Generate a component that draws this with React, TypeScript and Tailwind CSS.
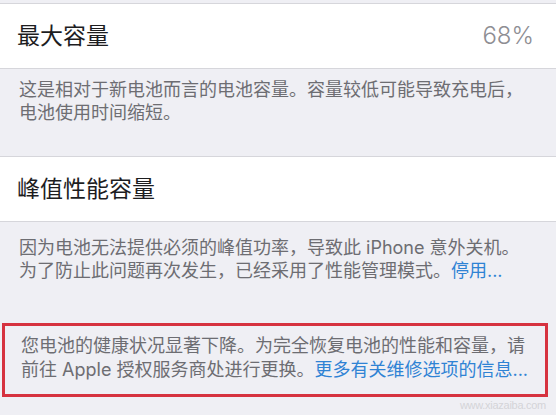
const font = "font-['Inter','Noto_Sans_CJK_SC',sans-serif]";

type RowProps = { title: string; value?: string };

const Row = ({ title, value }: RowProps) => (
    <div className="flex h-[66px] items-center justify-between border-y border-[#d6d6db] bg-white pl-[17px] pr-[22px]">
        <span className="text-[23px] text-[#1d1d1f]">{title}</span>
        {value && <span className="text-[24px] font-light text-[#8e8e93]">{value}</span>}
    </div>
);

const Line = ({ children }: { children: React.ReactNode }) => (
    <div className="whitespace-nowrap">{children}</div>
);

const Link = ({ children }: { children: React.ReactNode }) => (
    <span className="text-[#2f83d4]">{children}</span>
);

export default function App() {
    return (
        <div className={`relative h-[415px] w-[556px] overflow-hidden bg-[#efeff4] pt-[3px] ${font}`}>
            <Row title="最大容量" value="68%" />
            <div className="px-[19px] pb-[32px] pt-[9px] text-[18px] leading-[23px] text-[#6d6d72]">
                <Line>这是相对于新电池而言的电池容量。容量较低可能导致充电后，</Line>
                <Line>电池使用时间缩短。</Line>
            </div>
            <Row title="峰值性能容量" />
            <div className="px-[19px] pt-[14px] text-[18px] leading-[23px] text-[#6d6d72]">
                <Line>因为电池无法提供必须的峰值功率，导致此 iPhone 意外关机。</Line>
                <Line>
                    为了防止此问题再次发生，已经采用了性能管理模式。<Link>停用...</Link>
                </Line>
            </div>
            <div className="ml-[2px] mt-[41px] w-[546px] border-[3px] border-[#d6323f] pb-[12px] pl-[16px] pt-[8px] text-[18px] leading-[24px] text-[#6d6d72]">
                <Line>您电池的健康状况显著下降。为完全恢复电池的性能和容量，请</Line>
                <Line>
                    前往 Apple 授权服务商处进行更换。<Link>更多有关维修选项的信息...</Link>
                </Line>
            </div>
            <span className="absolute bottom-[2px] right-[10px] text-[11px] tracking-tight text-[#d4d4d8] font-['Liberation_Sans',sans-serif]">
                www.xiazaiba.com
            </span>
        </div>
    );
}
